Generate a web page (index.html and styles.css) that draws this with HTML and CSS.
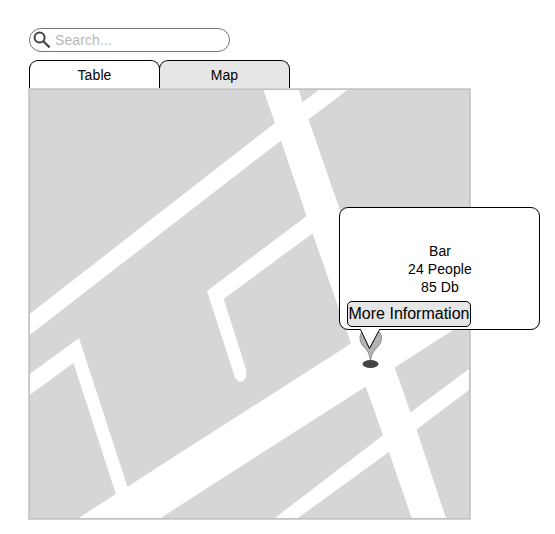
FILE: index.html
```html
<!DOCTYPE html>
<html lang="en">
<head>
<meta charset="utf-8">
<title>Map</title>
<link rel="stylesheet" href="styles.css">
</head>
<body>
<main class="panel">
  <label class="search">
    <svg class="search-icon" width="18" height="18" viewBox="0 0 18 18"><circle cx="6.6" cy="6.4" r="5" fill="none" stroke="#444" stroke-width="2"/><path d="M10.3 10.2L16.6 16.4" stroke="#444" stroke-width="2.2"/></svg>
    <span>Search...</span>
  </label>
  <nav class="tabs">
    <a class="tab">Table</a>
    <a class="tab tab-shaded">Map</a>
  </nav>
  <section class="map">
    <svg class="streets" width="443" height="432" viewBox="28 88 443 432">
      <rect x="28" y="88" width="443" height="432" fill="#d6d6d6"/>
      <g fill="#fff">
        <path d="M29 314.5L275 123L320 89H348.500L308.500 119.500L281 140.500L29 335.500Z"/>
        <path d="M263 89H298.500L302.500 102.500L308.500 119.500L394.700 367.500L416.500 429.500L446.300 519H412L389 452L365.700 386.500L351 343.500L306.500 216L275 123Z"/>
        <path d="M77 519L351 343.500L395 315H471V318.500L394.700 367.500L365.700 386.500L159 519Z"/>
        <path d="M29 374.500L79 338L127.500 487L116 494.500L73.500 363L29 395.500Z"/>
        <path d="M307 215.700L207 291L234.500 376C237 384 246.500 384 246.500 373C246.500 371 246 369 245 366L223.700 299L313 233Z"/>
        <path d="M273.500 519L382.700 435.500L410.300 412.500L471 367.500V388.500L416.500 429.500L389 452L296.500 519Z"/>
      </g>
      <rect x="28.5" y="88.5" width="442" height="431" fill="none" stroke="#d2d2d2"/>
      <rect x="29.500" y="89.500" width="440" height="429" fill="none" stroke="#c2c2c2"/>
      <path d="M370.500 361C369.500 354 368 351 364 347C361 344 360 341 360 338C360 325 381.500 325 381.500 338C381.500 341 380.500 344 377.500 347C373.500 351 371.500 354 370.500 361Z" fill="#b3b3b3" stroke="#8c8c8c"/>
      <ellipse cx="370.500" cy="364" rx="8" ry="4" fill="#444"/>
    </svg>
    <aside class="popup">
      <p>Bar</p>
      <p>24 People</p>
      <p>85 Db</p>
      <button class="more">More Information</button>
      <svg class="pointer" width="22" height="22" viewBox="0 0 22 22"><path d="M1.500 0V1.500L10.500 20L20.500 1.500V0Z" fill="#fff"/><path d="M0 1.500H1.500L10.500 20.500L20.500 1.500H22" fill="none" stroke="#000"/></svg>
    </aside>
  </section>
</main>
</body>
</html>
```
FILE: styles.css
```css
* { box-sizing: border-box; }
body {
  margin: 0;
  background: #fff;
  color: #000;
  font: 14px/18px "Liberation Sans", Arial, sans-serif;
}
.panel { width: 443px; margin: 28px 0 0 28px; }
.search {
  display: flex;
  align-items: center;
  width: 201px;
  height: 24px;
  margin-left: 1px;
  padding-left: 3px;
  border: 1px solid #777;
  border-radius: 12px;
  color: #b8b8b8;
  gap: 4px;
  letter-spacing: 0.1px;
}
.tabs { display: flex; height: 28px; margin: 8px 0 0 1px; }
.tab {
  width: 131px;
  padding-top: 5px;
  border: 1px solid #000;
  border-bottom: 0;
  border-radius: 9px 9px 0 0;
  text-align: center;
  letter-spacing: 0.1px;
}
.tab-shaded { margin-left: -1px; background: #e6e6e6; }
.map { position: relative; height: 432px; }
.streets { display: block; }
.popup {
  position: absolute;
  left: 311px;
  top: 119px;
  width: 201px;
  height: 123px;
  padding: 34px 6px 0 7px;
  border: 1px solid #000;
  border-radius: 9px;
  background: #fff;
  text-align: center;
}
.popup p { margin: 0; letter-spacing: 0.1px; }
.more {
  display: block;
  width: 124px;
  height: 26px;
  margin-top: 5px;
  padding: 0;
  border: 1px solid #000;
  border-radius: 5px;
  background: #e6e6e6;
  color: #000;
  font: 16px/24px "Liberation Sans", Arial, sans-serif;
  white-space: nowrap;
}
.pointer { position: absolute; left: 19px; top: 120px; }
```
